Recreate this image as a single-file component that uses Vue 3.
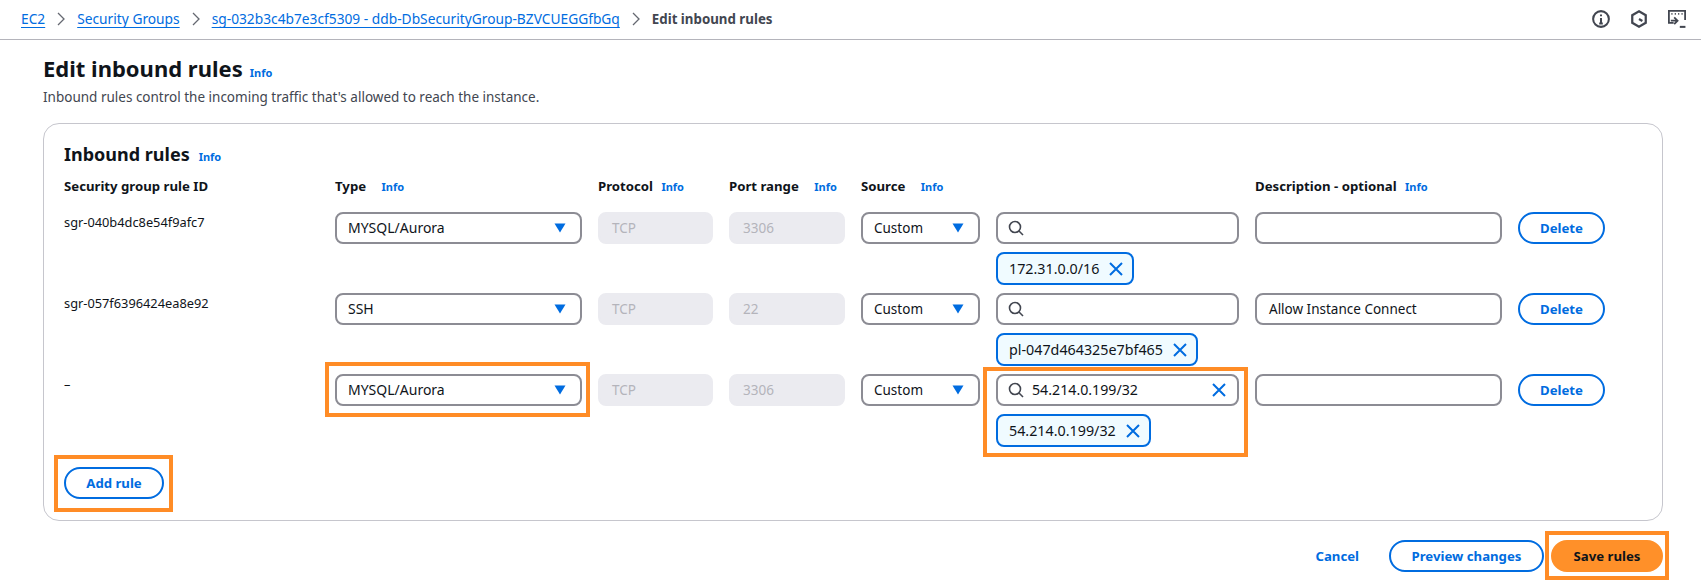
<template>
  <div class="page">
    <header class="topbar">
      <nav class="crumbs">
        <template v-for="(c, i) in crumbs" :key="c">
          <a class="crumb-link">{{ c }}</a>
          <svg class="chev" width="8" height="14" viewBox="0 0 8 14"><path d="M1 1l6 6-6 6" fill="none" stroke="#656871" stroke-width="1.3" /></svg>
        </template>
        <span class="crumb-current">Edit inbound rules</span>
      </nav>
      <div class="top-icons">
        <svg width="18" height="18" viewBox="0 0 16 16" fill="none" stroke="#424650" stroke-width="1.8">
          <circle cx="8" cy="8" r="7" />
          <path d="M8 7v5M6.4 12h3.2M8 4v1.6" />
        </svg>
        <svg width="18" height="18" viewBox="0 0 16 16" fill="none" stroke="#424650" stroke-width="2">
          <path d="M8 1.2l6 3.4v6.8l-6 3.4-6-3.4V4.600z" />
          <path d="M8 8l3 1.800" />
        </svg>
        <svg width="18" height="18" viewBox="0 0 16 16" fill="none" stroke="#424650" stroke-width="1.6">
          <path d="M5 11.500H.8V.8h14.400v8" />
          <path d="M3 3.500h1M6 3.500h1M9 3.500h1M12 3.500h1" />
          <path d="M5.500 6.500L8.500 9.500 5.500 12.500M2.500 9.500h6" />
          <path d="M10.500 15h5" stroke-width="1.800" />
        </svg>
      </div>
    </header>

    <main class="content">
      <div class="title-row">
        <h1>Edit inbound rules</h1>
        <a class="info">Info</a>
      </div>
      <p class="subtitle">Inbound rules control the incoming traffic that's allowed to reach the instance.</p>

      <section class="card">
        <div class="card-title">
          <h2>Inbound rules</h2>
          <a class="info">Info</a>
        </div>

        <div class="grid heads">
          <div class="head">Security group rule ID</div>
          <div class="head">Type <a class="info wide">Info</a></div>
          <div class="head">Protocol <a class="info">Info</a></div>
          <div class="head">Port range <a class="info wide">Info</a></div>
          <div class="head">Source <a class="info wide">Info</a></div>
          <div></div>
          <div class="head">Description - optional <a class="info">Info</a></div>
          <div></div>
        </div>

        <div v-for="rule in rules" :key="rule.id" class="grid rule">
          <div class="rule-id">{{ rule.id }}</div>
          <div :class="{ mark: rule.marked }">
            <div class="select">
              <span class="type-value">{{ rule.type }}</span>
              <svg class="caret" width="12" height="10" viewBox="0 0 12 10"><path d="M0.500 0.500h11L6 9.500z" fill="#006ce0" /></svg>
            </div>
          </div>
          <div class="field disabled">TCP</div>
          <div class="field disabled">{{ rule.port }}</div>
          <div class="select">
            <span>Custom</span>
            <svg class="caret" width="12" height="10" viewBox="0 0 12 10"><path d="M0.500 0.500h11L6 9.500z" fill="#006ce0" /></svg>
          </div>
          <div :class="['source', { 'mark mark-source': rule.marked }]">
            <div class="field search">
              <svg width="16" height="16" viewBox="0 0 16 16" fill="none" stroke="#424650" stroke-width="1.600">
                <circle cx="7" cy="7" r="5.500" />
                <path d="M11 11l4 4" />
              </svg>
              <span class="search-value">{{ rule.query }}</span>
              <svg v-if="rule.query" width="16" height="16" viewBox="0 0 16 16" fill="none" stroke="#006ce0" stroke-width="2"><path d="M2 2l12 12M14 2L2 14" /></svg>
            </div>
            <div class="token">
              <span>{{ rule.cidr }}</span>
              <svg width="16" height="16" viewBox="0 0 16 16" fill="none" stroke="#006ce0" stroke-width="2"><path d="M2 2l12 12M14 2L2 14" /></svg>
            </div>
          </div>
          <div class="field">{{ rule.description }}</div>
          <button class="btn">Delete</button>
        </div>

        <div class="add-row">
          <button class="btn add mark mark-add">Add rule</button>
        </div>
      </section>

      <footer class="actions">
        <a class="cancel">Cancel</a>
        <button class="btn preview">Preview changes</button>
        <button class="btn save mark mark-save">Save rules</button>
      </footer>
    </main>
  </div>
</template>

<script setup>
const crumbs = ['EC2', 'Security Groups', 'sg-032b3c4b7e3cf5309 - ddb-DbSecurityGroup-BZVCUEGGfbGq']

const rules = [
  { id: 'sgr-040b4dc8e54f9afc7', type: 'MYSQL/Aurora', port: '3306', query: '', cidr: '172.31.0.0/16', description: '' },
  { id: 'sgr-057f6396424ea8e92', type: 'SSH', port: '22', query: '', cidr: 'pl-047d464325e7bf465', description: 'Allow Instance Connect' },
  { id: '–', type: 'MYSQL/Aurora', port: '3306', query: '54.214.0.199/32', cidr: '54.214.0.199/32', description: '', marked: true },
]
</script>

<style>
body {
  background: #fff;
}
</style>

<style scoped>
.page {
  width: 1701px;
  height: 588px;
  overflow: hidden;
  font-family: "Noto Sans", sans-serif;
  font-size: 13.5px;
  line-height: 20px;
  color: #0f141a;
}

.topbar {
  height: 40px;
  box-sizing: border-box;
  border-bottom: 1px solid #b4b4bb;
  padding: 0 15px 1px 21px;
  display: flex;
  align-items: center;
  justify-content: space-between;
}

.crumbs {
  display: flex;
  align-items: center;
  gap: 12px;
}

.crumb-link {
  color: #006ce0;
  font-size: 13.75px;
  text-decoration: underline;
  text-underline-offset: 3px;
}

.crumb-current {
  color: #424650;
  font-weight: 700;
  font-size: 13.3px;
}

.top-icons {
  display: flex;
  gap: 20px;
}

.content {
  padding: 14px 38px 0 43px;
}

.title-row {
  display: flex;
  align-items: baseline;
  gap: 7px;
  height: 28px;
}

h1 {
  margin: 0;
  font-size: 22px;
  line-height: 28px;
  font-weight: 700;
}

.info {
  color: #006ce0;
  font-size: 11px;
  font-weight: 700;
}

.head .info {
  margin-left: 5px;
}

.head .info.wide {
  margin-left: 12px;
}

.subtitle {
  margin: 5px 0 0;
  color: #424650;
}

.card {
  margin-top: 16px;
  box-sizing: border-box;
  width: 1620px;
  height: 398px;
  border: 1px solid #c6c6cd;
  border-radius: 16px;
  padding: 19px 20px 20px;
}

.card-title {
  display: flex;
  align-items: baseline;
  gap: 9px;
}

h2 {
  margin: 0;
  font-size: 18px;
  line-height: 22px;
  font-weight: 700;
}

.grid {
  display: grid;
  grid-template-columns: 255px 247px 115px 116px 119px 243px 247px 87px;
  column-gap: 16px;
}

.heads {
  margin-top: 9px;
  margin-bottom: 15px;
}

.head {
  font-size: 13.2px;
  font-weight: 700;
  white-space: nowrap;
}

.rule {
  height: 81px;
  align-items: start;
}

.rule-id {
  font-size: 12.8px;
}

.type-value {
  font-size: 14px;
}

.select,
.field {
  box-sizing: border-box;
  height: 32px;
  border: 2px solid #8c8c94;
  border-radius: 8px;
  padding: 0 12px;
  display: flex;
  align-items: center;
  white-space: nowrap;
}

.select {
  justify-content: space-between;
  padding: 0 11px;
}

.caret {
  margin-right: 3px;
}

.disabled {
  background: #ebebf0;
  border-color: #ebebf0;
  color: #b4b4bb;
}

.search {
  gap: 8px;
  padding: 0 10px;
}

.search-value {
  flex: 1;
  font-size: 14.2px;
}

.source {
  display: flex;
  flex-direction: column;
  align-items: flex-start;
  gap: 8px;
}

.source .field {
  width: 100%;
}

.token {
  box-sizing: border-box;
  height: 33px;
  display: inline-flex;
  align-items: center;
  gap: 9px;
  padding: 0 8px 0 11px;
  border: 2px solid #006ce0;
  border-radius: 8px;
  background: #f0fbff;
  font-size: 14.3px;
  white-space: nowrap;
}

.btn {
  box-sizing: border-box;
  height: 32px;
  border: 2px solid #006ce0;
  border-radius: 16px;
  background: #fff;
  color: #006ce0;
  font: 700 13.2px/20px "Noto Sans", sans-serif;
  padding: 0;
  white-space: nowrap;
}

.add-row {
  margin-top: 12px;
}

.add {
  width: 100px;
}

.actions {
  margin-top: 19px;
  width: 1620px;
  display: flex;
  justify-content: flex-end;
  align-items: center;
}

.cancel {
  color: #006ce0;
  font-size: 13.2px;
  font-weight: 700;
  margin-right: 30px;
}

.preview {
  width: 155px;
  margin-right: 7px;
}

.save {
  width: 112px;
  background: #ff9029;
  border-color: #ff9029;
  color: #0f141a;
}

/* orange call-outs drawn over the screenshot */
.mark {
  position: relative;
}

.mark::after {
  content: "";
  position: absolute;
  inset: -12px -8px -11px -10px;
  border: 4px solid #ff8c26;
  pointer-events: none;
}

.mark-source::after {
  inset: -7px -9px -10px -13px;
}

/* the buttons have a 2px border, so these start from inside it */
.mark-add::after {
  inset: -14px -11px -15px -12px;
}

.mark-save::after {
  inset: -11px -8px -10px -8px;
}
</style>
